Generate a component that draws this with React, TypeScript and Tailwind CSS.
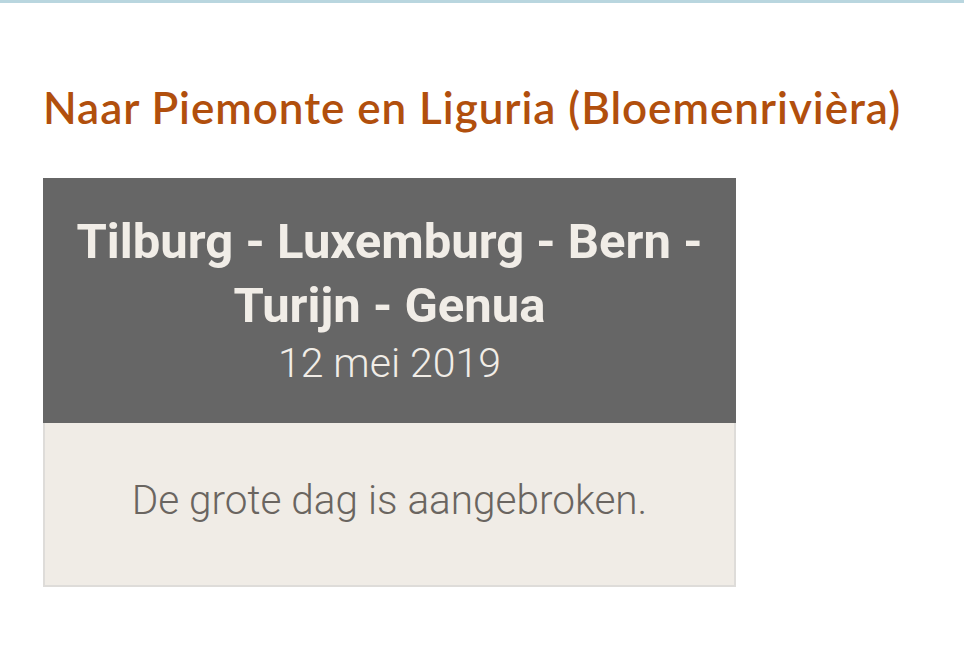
export default function App() {
	return (
		<div className="min-h-[656px] w-full border-t-[3px] border-[#b9d6df] bg-white">
			<div className="px-[43px] pt-[76px]">
				<h1 className="text-[44px] leading-[56px] font-semibold tracking-[0.95px] text-[#b14f0d] [font-family:Lato,'Noto_Sans',sans-serif]">
					Naar Piemonte en Liguria (Bloemenrivièra)
				</h1>
				<div className="mt-[43px] w-[693px] [font-family:Roboto,'Noto_Sans',sans-serif]">
					<div className="flex h-[245px] flex-col items-center bg-[#666666] px-6 pt-[32px] text-center text-[#f1ede7]">
						<h2 className="text-[49px] leading-[64px] font-bold">
							Tilburg - Luxemburg - Bern - Turijn - Genua
						</h2>
						<p className="text-[41px] leading-[50px] font-light">12 mei 2019</p>
					</div>
					<div className="flex h-[164px] items-center justify-center border-2 border-t-0 border-[#dedcd9] bg-[#f0ece6] pb-[8px]">
						<p className="text-[40.5px] font-light text-[#6a6560]">De grote dag is aangebroken.</p>
					</div>
				</div>
			</div>
		</div>
	);
}
